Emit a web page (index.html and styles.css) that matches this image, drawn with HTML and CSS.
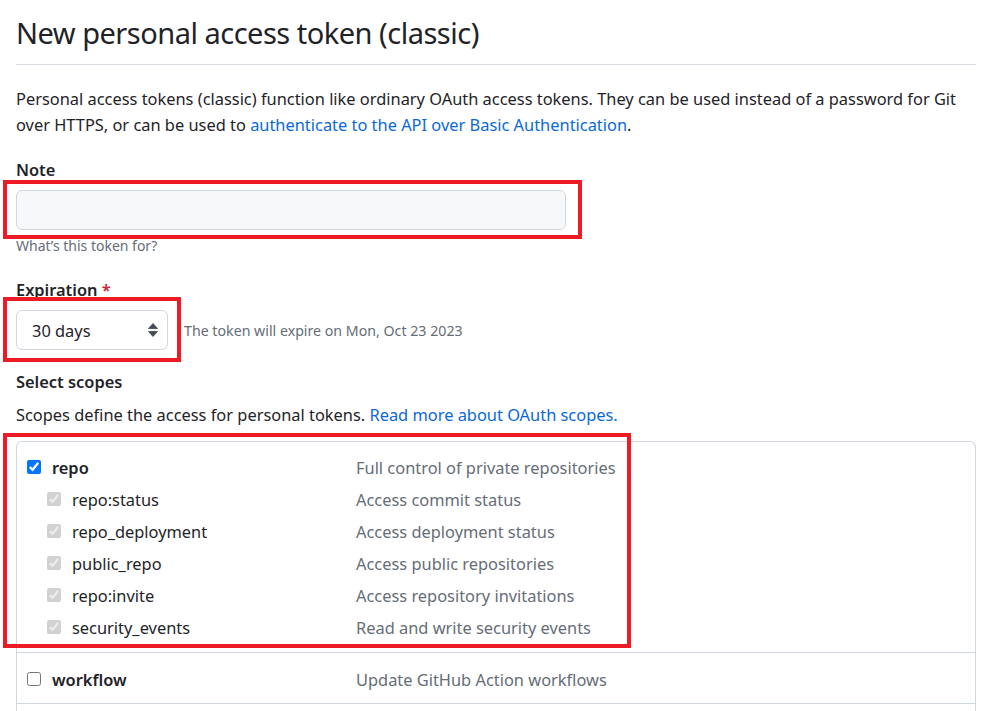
FILE: index.html
```html
<!DOCTYPE html>
<html lang="en">
<head>
<meta charset="utf-8">
<title>New personal access token (classic)</title>
<link rel="stylesheet" href="styles.css">
</head>
<body>
<div class="page">
  <h1 class="subhead">New personal access token (classic)</h1>
  <p class="intro"><span>Personal access tokens (classic) function like ordinary OAuth access tokens. They can be used instead of a password for Git</span><br><span>over HTTPS, or can be used to</span> <a href="#">authenticate to the API over Basic Authentication</a>.</p>

  <div class="field field-note">
    <label class="label">Note</label>
    <div class="input"></div>
    <p class="note">What’s this token for?</p>
  </div>

  <div class="field field-exp">
    <label class="label">Expiration <span class="req">*</span></label>
    <div class="exp-row">
      <div class="select">
        <span>30 days</span>
        <svg class="arrows" width="10" height="16" viewBox="0 0 10 16"><path d="M5 1.5 L9.5 6.5 H0.5 Z" fill="#424a53" stroke="#424a53" stroke-linejoin="round" stroke-width="0.8"/><path d="M5 14.5 L9.5 9.5 H0.5 Z" fill="#424a53" stroke="#424a53" stroke-linejoin="round" stroke-width="0.8"/></svg>
      </div>
      <span class="exp-note">The token will expire on Mon, Oct 23 2023</span>
    </div>
  </div>

  <div class="field field-scopes">
    <label class="label">Select scopes</label>
    <p class="scopes-desc">Scopes define the access for personal tokens. <a href="#">Read more about OAuth scopes.</a></p>
    <div class="scopes">
      <div class="group">
        <div class="row main">
          <label class="name"><input type="checkbox" checked><b>repo</b></label>
          <span class="desc">Full control of private repositories</span>
        </div>
        <div class="row sub">
          <label class="name"><input type="checkbox" checked disabled>repo:status</label>
          <span class="desc">Access commit status</span>
        </div>
        <div class="row sub">
          <label class="name"><input type="checkbox" checked disabled>repo_deployment</label>
          <span class="desc">Access deployment status</span>
        </div>
        <div class="row sub">
          <label class="name"><input type="checkbox" checked disabled>public_repo</label>
          <span class="desc">Access public repositories</span>
        </div>
        <div class="row sub">
          <label class="name"><input type="checkbox" checked disabled>repo:invite</label>
          <span class="desc">Access repository invitations</span>
        </div>
        <div class="row sub">
          <label class="name"><input type="checkbox" checked disabled>security_events</label>
          <span class="desc">Read and write security events</span>
        </div>
      </div>
      <div class="group">
        <div class="row main">
          <label class="name"><input type="checkbox"><b>workflow</b></label>
          <span class="desc">Update GitHub Action workflows</span>
        </div>
      </div>
      <div class="group empty"></div>
    </div>
  </div>
</div>
<div class="mark mark-note"></div>
<div class="mark mark-exp"></div>
<div class="mark mark-scopes"></div>
</body>
</html>
```

FILE: styles.css
```css
* { box-sizing: border-box; }
html, body { margin: 0; padding: 0; background: #fff; }
body {
  font-family: "Noto Sans", "Open Sans", "Liberation Sans", sans-serif;
  color: #1f2328;
  font-size: 16.4px;
  overflow: hidden;
  height: 711px;
  position: relative;
}
.page { width: 960px; margin-left: 16px; }
a { color: #0969da; text-decoration: none; }
.subhead {
  margin: 0;
  padding-top: 11px;
  padding-bottom: 10px;
  font-size: 29px;
  font-weight: 400;
  line-height: 43px;
  border-bottom: 1px solid #d8dee4;
  letter-spacing: -0.5px;
}
.intro {
  margin: 21px 0 0;
  line-height: 26px;
}
.field-note { margin-top: 20px; }
.field-exp { margin-top: 23px; }
.field-scopes { margin-top: 20px; }
.label {
  display: block;
  font-weight: 600;
  line-height: 24px;
}
.req { color: #cf222e; }
.input {
  margin-top: 8px;
  width: 550px;
  height: 40px;
  background: #f6f8fa;
  border: 1px solid #d0d7de;
  border-radius: 6px;
}
.note {
  margin: 7px 0 0;
  font-size: 14px;
  color: #656d76;
  line-height: 18px;
}
.exp-row { display: flex; align-items: center; margin-top: 8px; gap: 16px; }
.select {
  width: 152px;
  height: 40px;
  border: 1px solid #d0d7de;
  border-radius: 6px;
  display: flex;
  align-items: center;
  justify-content: space-between;
  padding: 0 9px 0 15px;
}
.exp-note { font-size: 14.2px; color: #656d76; }
.scopes-desc { margin: 9px 0 0; line-height: 24px; }
.scopes {
  margin-top: 14px;
  border: 1px solid #d0d7de;
  border-bottom: none;
  border-radius: 6px 6px 0 0;
}
.group { border-bottom: 1px solid #d0d7de; padding: 10px 0 8px; }
.group:first-child { padding: 9px 0 9px; }
.group.empty { height: 20px; padding: 0; }
.row { display: flex; align-items: center; height: 32px; }
.name { display: flex; align-items: center; width: 339px; }
.row.main .name { padding-left: 10px; }
.row.sub .name { padding-left: 30px; }
.name input { margin: 0 11px 0 0; width: 14px; height: 14px; }
.name b { font-weight: 600; }
.desc { color: #656d76; }
.mark {
  position: absolute;
  border: 4px solid #ed1c24;
}
.mark-note { left: 3px; top: 180px; width: 579px; height: 59px; }
.mark-exp { left: 3px; top: 297px; width: 178px; height: 65px; }
.mark-scopes { left: 3px; top: 433px; width: 628px; height: 215px; }
```
